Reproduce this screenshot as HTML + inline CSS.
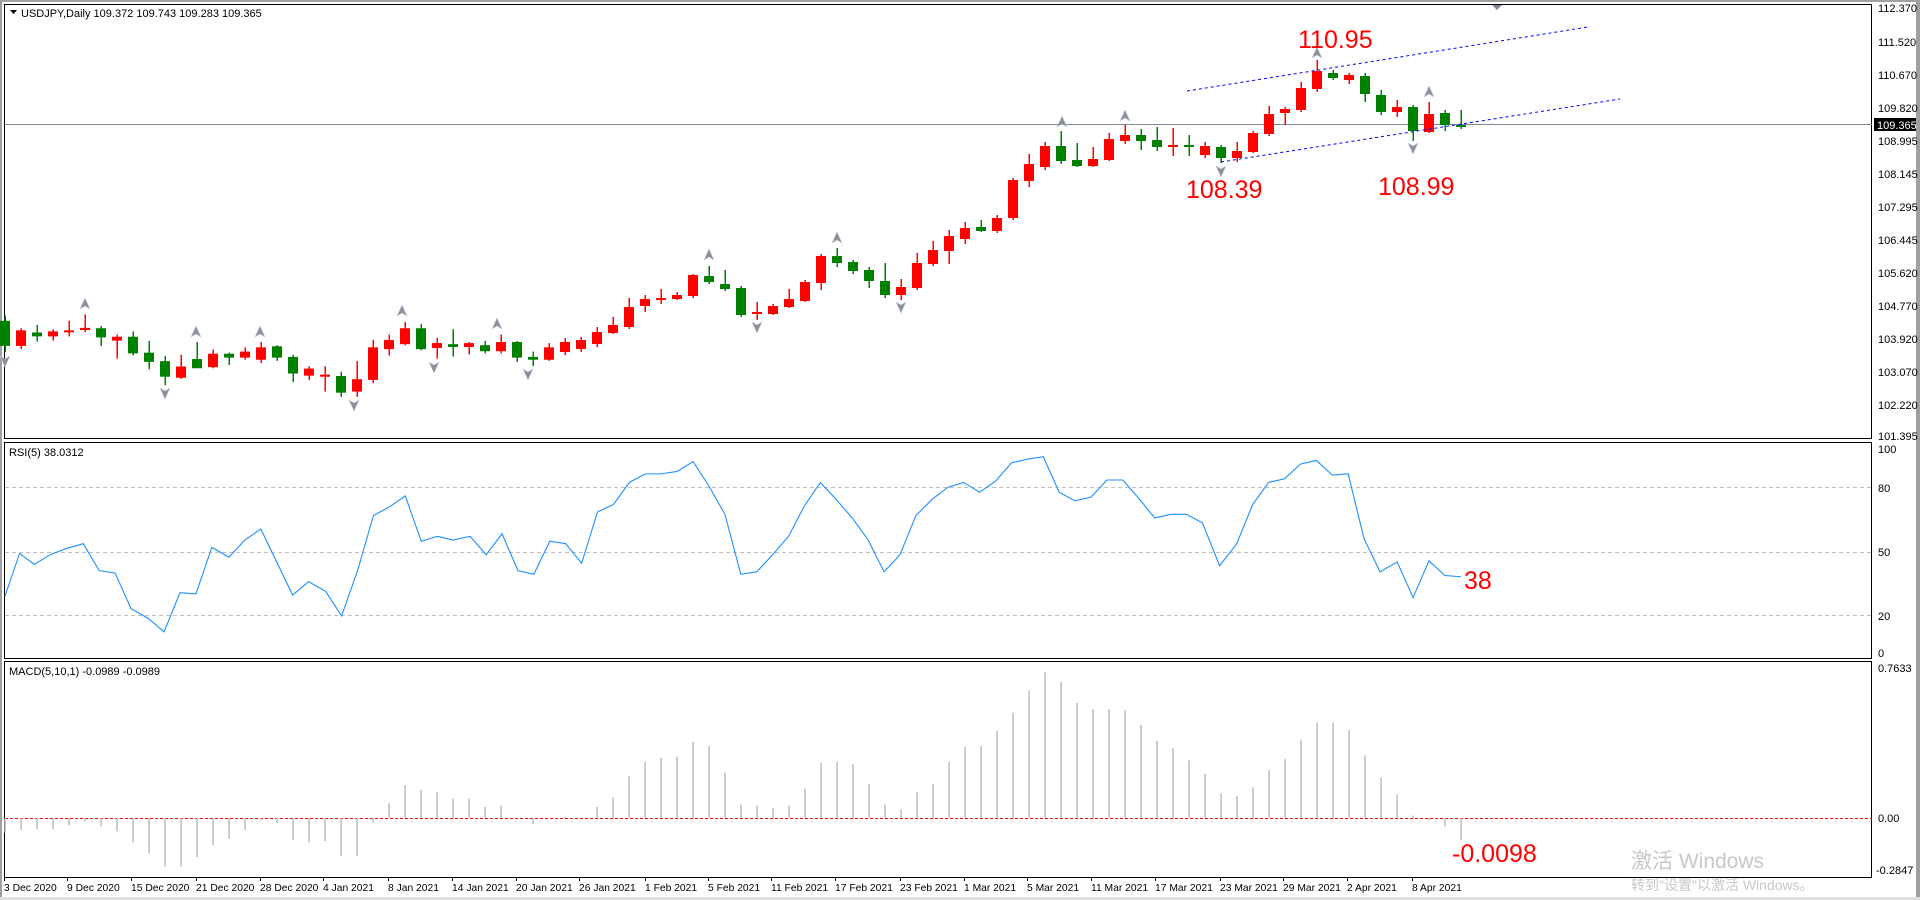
<!DOCTYPE html>
<html><head><meta charset="utf-8">
<style>
html,body{margin:0;padding:0;background:#fff;width:1920px;height:900px;overflow:hidden}
svg{display:block}
text{font-family:"Liberation Sans","Noto Sans CJK SC",sans-serif}
.ax{font-size:11px;fill:#000}
.dt{font-size:10.3px;fill:#000}
</style></head><body>
<svg id="s" width="1920" height="900" viewBox="0 0 1920 900" xmlns="http://www.w3.org/2000/svg">
<rect x="0" y="0" width="1920" height="900" fill="#fff"/>
<rect x="0" y="0" width="1920" height="2" fill="#a0a0a0"/>
<rect x="0" y="0" width="2" height="900" fill="#a0a0a0"/>
<rect x="1916" y="0" width="4" height="900" fill="#a0a0a0"/>
<rect x="0" y="897" width="1920" height="3" fill="#e0e0e0"/>
<rect x="4.5" y="4.5" width="1867" height="434" fill="none" stroke="#000"/>
<rect x="4.5" y="442.5" width="1867" height="216" fill="none" stroke="#000"/>
<rect x="4.5" y="661.5" width="1867" height="216" fill="none" stroke="#000"/>
<g stroke="#c0c0c0" stroke-dasharray="4,3">
<line x1="5" y1="487.5" x2="1871" y2="487.5"/>
<line x1="5" y1="552.5" x2="1871" y2="552.5"/>
<line x1="5" y1="615.5" x2="1871" y2="615.5"/>
</g>
<line x1="5" y1="818.5" x2="1871" y2="818.5" stroke="#ff0000" stroke-dasharray="3,2"/>
<line x1="5" y1="124.5" x2="1872" y2="124.5" stroke="#808a94"/>
<g id="cand"></g>
<g id="arr"></g>
<line x1="1187" y1="91" x2="1588" y2="27" stroke="#0000ff" stroke-dasharray="3,3"/>
<line x1="1221" y1="162" x2="1620" y2="99" stroke="#0000ff" stroke-dasharray="3,3"/>
<path d="M1492 5 L1502 5 L1497 10 Z" fill="#808a94"/>
<g id="ind" transform="scale(1.2245)"></g>
<path d="M10 10 L17 10 L13.5 14 Z" fill="#000"/>
<text x="21" y="17" class="ax">USDJPY,Daily  109.372 109.743 109.283 109.365</text>
<text x="9" y="456" class="ax">RSI(5) 38.0312</text>
<text x="9" y="675" class="ax">MACD(5,10,1) -0.0989 -0.0989</text>
<g fill="#ff0000" style="font-size:25px">
<text x="1298" y="48">110.95</text>
<text x="1186" y="198">108.39</text>
<text x="1378" y="195">108.99</text>
<text x="1464" y="589">38</text>
<text x="1452" y="862">-0.0098</text>
</g>
<g class="ax">
<text x="1878" y="12">112.370</text>
<text x="1878" y="46">111.520</text>
<text x="1878" y="79">110.670</text>
<text x="1878" y="112">109.820</text>
<text x="1878" y="145">108.995</text>
<text x="1878" y="178">108.145</text>
<text x="1878" y="211">107.295</text>
<text x="1878" y="244">106.445</text>
<text x="1878" y="277">105.620</text>
<text x="1878" y="310">104.770</text>
<text x="1878" y="343">103.920</text>
<text x="1878" y="376">103.070</text>
<text x="1878" y="409">102.220</text>
<text x="1878" y="440">101.395</text>
<text x="1878" y="453">100</text>
<text x="1878" y="492">80</text>
<text x="1878" y="556">50</text>
<text x="1878" y="620">20</text>
<text x="1878" y="657">0</text>
<text x="1878" y="672">0.7633</text>
<text x="1878" y="822">0.00</text>
<text x="1876" y="874">-0.2847</text>
</g>
<rect x="1874" y="118" width="42" height="13" fill="#000"/>
<text x="1877" y="129" class="ax" style="fill:#fff">109.365</text>
<g class="dt" id="dates">
<text x="4" y="891">3 Dec 2020</text>
<text x="67" y="891">9 Dec 2020</text>
<text x="131" y="891">15 Dec 2020</text>
<text x="196" y="891">21 Dec 2020</text>
<text x="260" y="891">28 Dec 2020</text>
<text x="323" y="891">4 Jan 2021</text>
<text x="388" y="891">8 Jan 2021</text>
<text x="452" y="891">14 Jan 2021</text>
<text x="516" y="891">20 Jan 2021</text>
<text x="579" y="891">26 Jan 2021</text>
<text x="645" y="891">1 Feb 2021</text>
<text x="708" y="891">5 Feb 2021</text>
<text x="771" y="891">11 Feb 2021</text>
<text x="835" y="891">17 Feb 2021</text>
<text x="900" y="891">23 Feb 2021</text>
<text x="964" y="891">1 Mar 2021</text>
<text x="1027" y="891">5 Mar 2021</text>
<text x="1091" y="891">11 Mar 2021</text>
<text x="1155" y="891">17 Mar 2021</text>
<text x="1220" y="891">23 Mar 2021</text>
<text x="1283" y="891">29 Mar 2021</text>
<text x="1347" y="891">2 Apr 2021</text>
<text x="1412" y="891">8 Apr 2021</text>
</g>
<g id="ticks" stroke="#000"></g>
<g fill="#c8c8c8">
<text x="1631" y="868" style="font-size:21px">激活 Windows</text>
<text x="1631" y="890" style="font-size:14px">转到"设置"以激活 Windows。</text>
</g>
</svg>
<script>
var NS="http://www.w3.org/2000/svg";
function el(p,t,a){var e=document.createElementNS(NS,t);for(var k in a)e.setAttribute(k,a[k]);p.appendChild(e);return e;}
var z4=[[87,158,72,175,'g'],[114,158,108,167,'r'],[120,131,99,146,'g'],[117,131,111,143,'r'],[114,119,87,131,'r'],[107,113,69,119,'r'],[108,134,102,158,'g'],[132,143,126,194,'r'],[132,179,117,185,'g'],[177,203,144,224,'g'],[201,245,186,269,'g'],[216,248,183,251,'r'],[195,221,147,221,'g'],[180,218,168,221,'r'],[180,191,177,212,'g'],[174,191,162,197,'r'],[162,197,147,206,'r'],[159,191,156,200,'g'],[189,236,183,260,'g'],[222,242,216,254,'r'],[239,245,216,287,'r'],[243,290,231,302,'g'],[252,287,201,302,'r'],[162,254,141,263,'r'],[141,167,126,185,'r'],[108,153,90,156,'r'],[108,167,96,170,'g'],[150,164,135,194,'r'],[153,161,111,188,'g'],[150,161,147,182,'r'],[156,173,144,179,'g'],[147,173,126,179,'r'],[147,191,144,203,'g'],[189,197,174,215,'g'],[162,197,150,200,'r']];
var C=z4.map(function(c){return [290+c[0]*.354,290+c[1]*.354,290+c[2]*.354,290+c[3]*.354,c[4]];});
C=C.concat([[342,352,338,355,'r'],[340,349,337,352,'r'],[332,344,327,347,'r'],[325,333,317,334,'r'],[307,327,298,329,'r'],[299,306,295,312,'r'],[298,300,289,304,'r'],[295,299,292,300,'r'],[275,296,274,298,'r'],[276,282,266,284,'g'],[284,289,270,291,'g'],[288,315,286,317,'g'],[312,314,302,320,'r'],[306,314,304,315,'r'],[299,307,289,308,'r'],[282,301,280,302,'r'],[256,283,254,290,'r'],[256,263,248,267,'g'],[262,271,260,274,'g'],[270,281,267,288,'g'],[281,295,263,298,'g'],[287,295,279,300,'r'],[263,288,253,290,'r'],[250,264,241,266,'r'],[236,251,230,264,'r'],[228,239,222,244,'r'],[227,231,220,232,'g'],[218,231,215,233,'r'],
[180,218,178,220,'r'],[164,181,154,187,'r'],[146,167,142,170,'r'],[146,161,131,164,'g'],[160,166,143,167,'g'],[159,166,147,167,'r'],[139,160,133,161,'r'],[135,141,125,144,'r'],[135,141,129,150,'g'],[140,147,127,151,'g'],[145,147,128,156,'r'],[145,146,135,156,'g'],[146,155,142,158,'r'],[147,158,145,163,'g'],[151,158,142,162,'r'],[133,152,131,153,'r'],[114,134,106,136,'r'],[109,113,107,125,'r'],[88,110,82,112,'r'],[71,89,60,92,'r'],[73,78,70,80,'g'],[75,80,73,84,'r'],[76,94,73,102,'g'],[95,112,90,115,'g'],[107,112,100,117,'r'],[107,131,105,141,'g'],[114,132,102,133,'r'],[113,125,110,131,'g'],[125,126,110,129,'g']]);
var g=document.getElementById('cand');
C.forEach(function(c,i){var x=5+16*i,col=c[4]=='r'?'#ff0000':'#008000';
el(g,'rect',{x:x-0.5,y:c[2],width:1.5,height:c[3]-c[2],fill:col});
el(g,'rect',{x:x-5,y:c[0],width:10,height:Math.max(2,c[1]-c[0]),fill:col});});
var ag=document.getElementById('arr');
function arrow(x,y,up){var s=up?1:-1;el(ag,'path',{d:'M'+x+' '+(y-6*s)+' L'+(x+5)+' '+(y+5*s)+' L'+x+' '+(y+2*s)+' L'+(x-5)+' '+(y+5*s)+' Z',fill:'#8a8f98',stroke:'#c0c8d8','stroke-width':0.6});}
[[85,304],[196,332],[260,332],[402,311],[497,324],[709,255],[837,238],[1062,122],[1125,116],[1317,53],[1429,92]].forEach(function(p){arrow(p[0],p[1],true)});
[[5,361],[165,393],[354,405],[434,367],[528,374],[757,327],[901,307],[1221,171],[1413,148]].forEach(function(p){arrow(p[0],p[1],false)});
var tg=document.getElementById('ticks');
[4,67,131,196,260,323,388,452,516,579,645,708,771,835,900,964,1027,1091,1155,1220,1283,1347,1412].forEach(function(x){el(tg,'line',{x1:x+0.5,y1:877,x2:x+0.5,y2:881});});
var ig=document.getElementById('ind');
var R=[[4,487],[16,452],[28,461],[41,453],[54,448],[68,444],[81,466],[94,468],[107,497],[121,505],[134,516],[147,484],[160,485],[173,447],[187,455],[200,441],[213,432],[226,459],[239,486],[252,475],[266,483],[279,503],[292,466],[305,421],[318,414],[331,405],[344,442],[357,438],[370,441],[384,438],[397,453],[410,436],[423,466],[436,469],[449,442],[462,444],[475,460],[488,418],[501,412],[514,394],[527,387],[540,387],[553,385],[566,377],[579,397],[592,420],[605,469],[618,467],[631,453],[644,438],[657,413],[670,394],[683,408],[696,423],[709,441],[722,467],[735,453],[748,421],[761,408],[774,398],[787,394],[800,402],[813,393],[826,378],[839,375],[852,373],[865,402],[878,409],[891,406],[904,392],[917,392],[930,407],[943,423],[956,420],[969,420],[982,427],[996,462],[1010,444],[1023,412],[1036,394],[1049,391],[1062,379],[1075,376],[1088,388],[1101,387],[1114,440],[1127,467],[1141,459],[1154,488],[1167,458],[1180,470],[1193,471]];
el(ig,'polyline',{points:R.map(function(p){return p.join(',')}).join(' '),fill:'none',stroke:'#1e90ff','stroke-width':0.9});
var M=[680,678,677,677,674,671,675,679,688,697,708,708,700,690,685,678,670,672,686,688,687,699,699,672,656,641,645,647,652,652,659,658,668,673,668,667,668,659,651,634,622,619,618,606,609,631,657,658,660,658,644,623,622,624,640,657,661,647,640,622,610,609,597,582,564,549,557,574,579,579,580,592,605,611,621,632,648,650,643,629,620,604,590,590,596,617,635,649,666,670,675,686];
M.forEach(function(v,i){var x=(5+16*i)/1.2245;var y0=668;el(ig,'rect',{x:x-0.6,y:Math.min(v,y0),width:1.3,height:Math.abs(v-y0),fill:'#c0c0c0'});});
</script>
</body></html>
